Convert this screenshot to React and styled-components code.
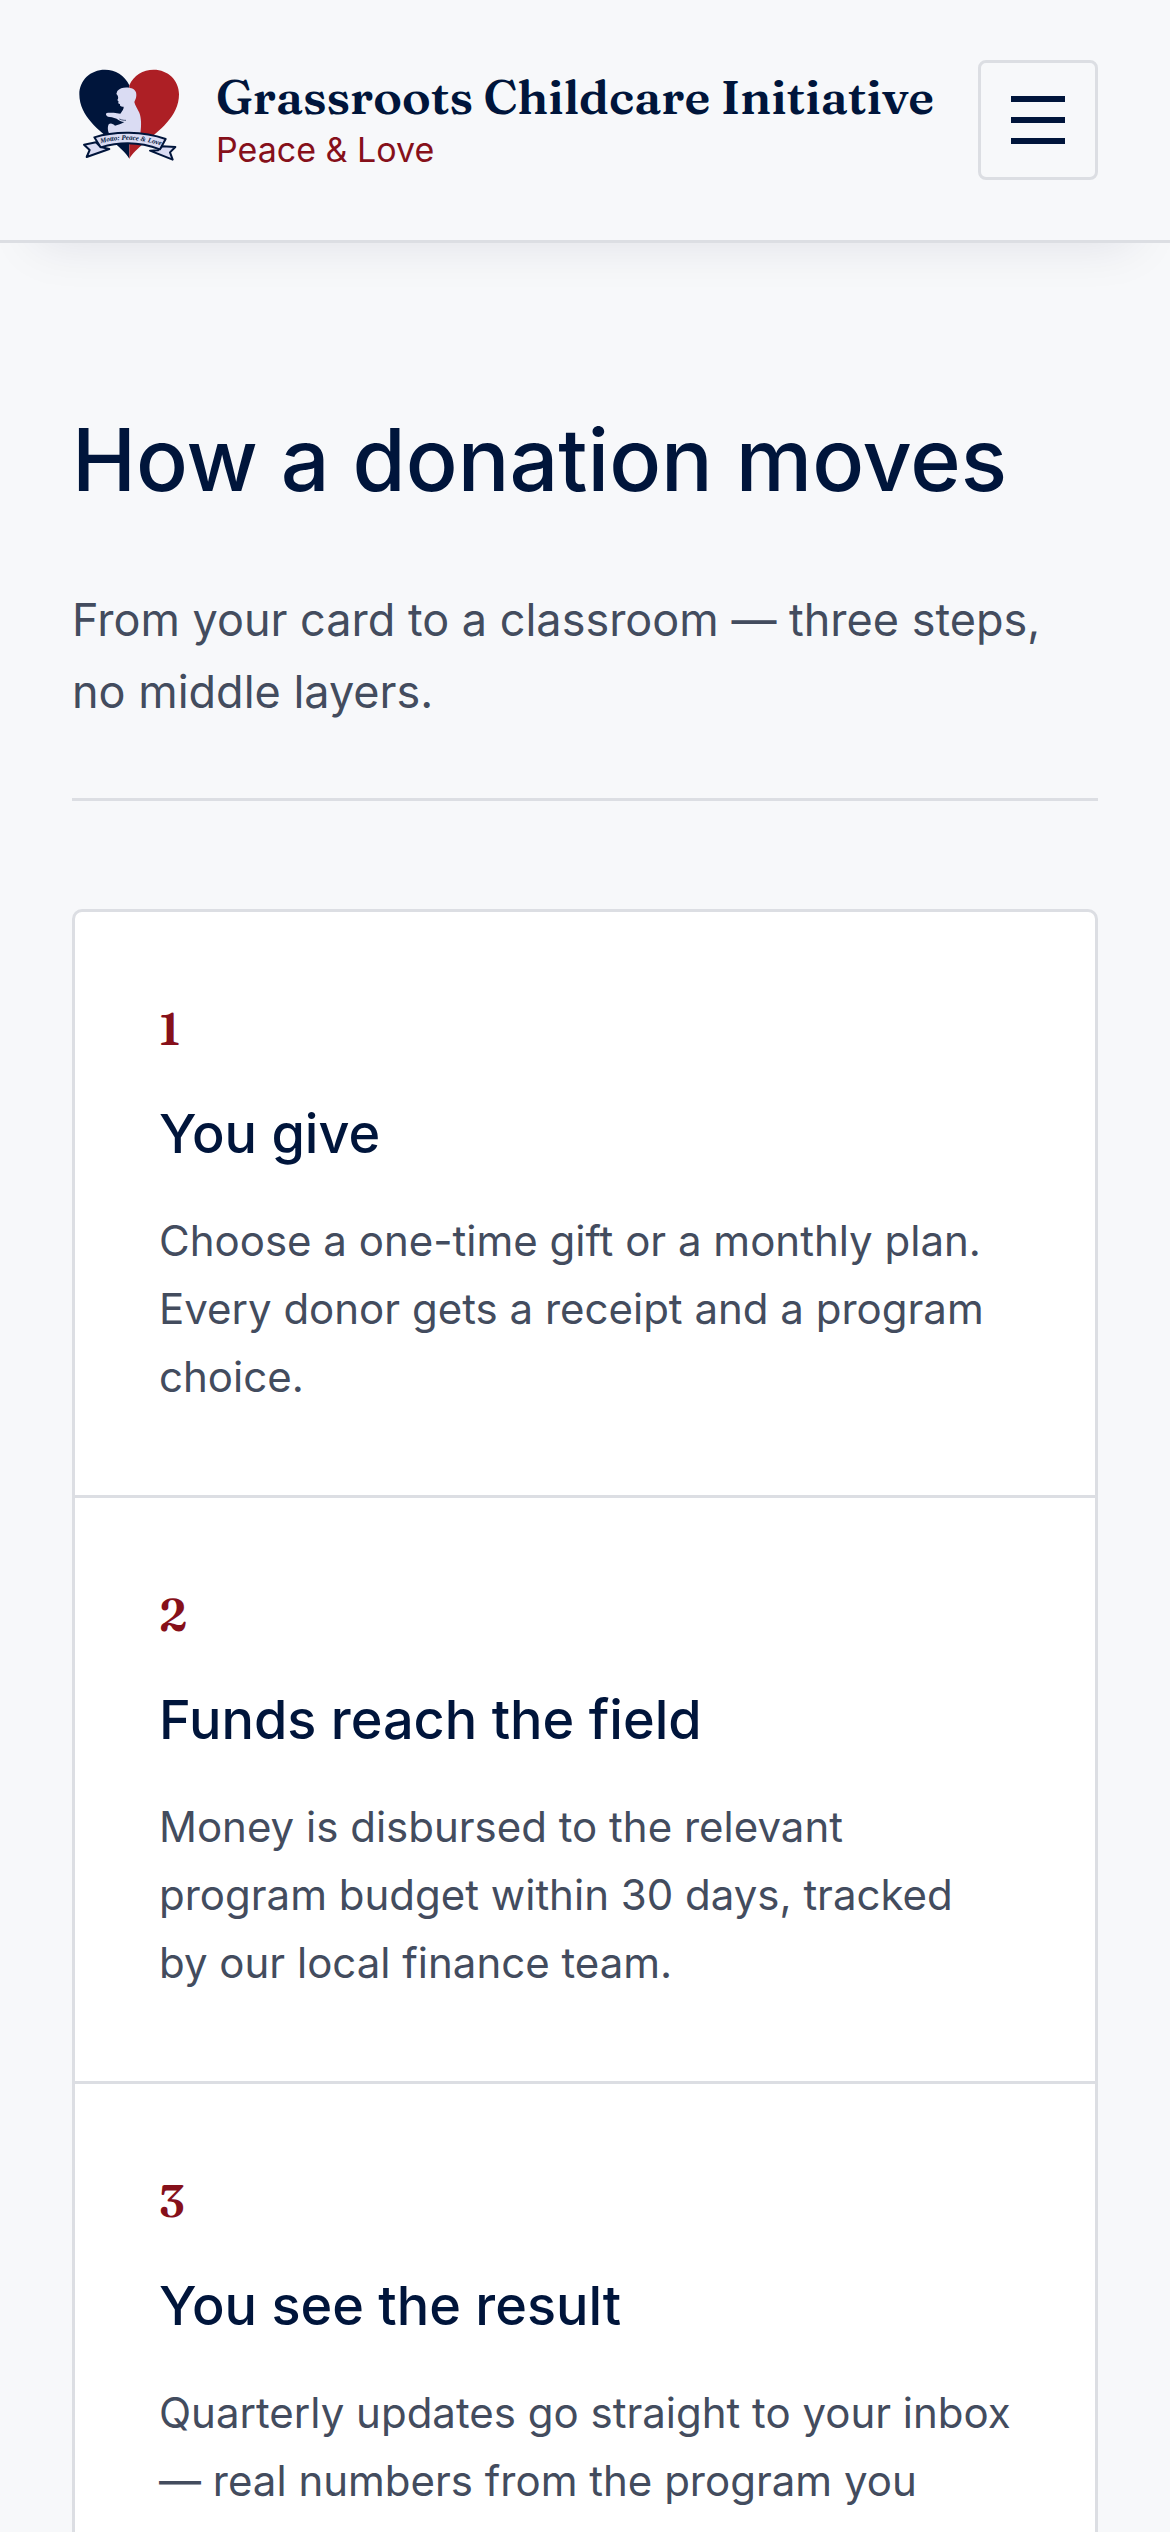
// IMPORTS
// react
import React from 'react';
// styled components
import styled, { createGlobalStyle } from 'styled-components';

// DATA
const steps = [
    {
        number: 1,
        title: 'You give',
        text: 'Choose a one-time gift or a monthly plan. Every donor gets a receipt and a program choice.',
    },
    {
        number: 2,
        title: 'Funds reach the field',
        text: 'Money is disbursed to the relevant program budget within 30 days, tracked by our local finance team.',
    },
    {
        number: 3,
        title: 'You see the result',
        text: 'Quarterly updates go straight to your inbox — real numbers from the program you',
    },
];

// COMPONENTS
const Logo = () => (
    <LogoMark viewBox="36 39 342 342" aria-hidden="true">
        {/* heart halves */}
        <path
            fill="#00153b"
            d="M208 106 C194 76 166 59 135 59 C91 59 58 91 58 133 C58 199 120 244 160 276 C182 295 199 310 208 326 Z"
        />
        <path
            fill="#ad1f25"
            d="M208 106 C221 76 249 59 281 59 C324 59 357 91 357 133 C357 199 296 244 256 276 C234 295 217 310 208 326 Z"
        />
        {/* child */}
        <path
            fill="#dadcf3"
            d="M172 123 C180 113 197 111 210 114 C223 116 230 124 229 136 C229 144 226 149 223 156 C225 166 232 176 238 188 C244 203 245 226 241 250 L147 250 C143 242 142 228 147 222 C153 218 160 222 165 227 C174 225 184 221 193 216 C184 215 177 211 170 206 C160 202 151 200 144 200 C139 198 136 193 139 190 C144 187 154 189 161 188 L181 191 C187 183 192 176 191 170 C184 171 178 168 180 162 C175 161 173 159 176 155 L172 150 C177 144 174 136 169 132 Z"
        />
        <path d="M178 207 C187 211 193 211 198 211" fill="none" stroke="#00153b" strokeWidth="2" />
        {/* ribbon tails */}
        <g fill="#dadcf3" stroke="#00153b" strokeWidth="6" strokeLinejoin="round">
            <path d="M108 277 L72 284 L89 300 L80 321 L148 297 L122 291 Z" />
            <path d="M307 289 L346 291 L330 307 L338 329 L270 302 L294 301 Z" />
            <path d="M103 262 C163 243 249 243 317 267 L300 298 C243 276 179 275 122 292 Z" />
        </g>
        <path id="ribbon-line" fill="none" d="M122 280 C181 264 242 265 316 291" />
        <LogoText>
            <textPath href="#ribbon-line">Motto: Peace &amp; Love</textPath>
        </LogoText>
    </LogoMark>
);

const App = () => {
    return (
        <>
            <GlobalStyle />
            <Header>
                <Brand href="#">
                    <Logo />
                    <BrandText>
                        <BrandName>Grassroots Childcare Initiative</BrandName>
                        <Tagline>Peace &amp; Love</Tagline>
                    </BrandText>
                </Brand>
                <MenuButton type="button" aria-label="Menu">
                    <MenuBar />
                    <MenuBar />
                    <MenuBar />
                </MenuButton>
            </Header>

            <Main>
                <Intro>
                    <h1>How a donation moves</h1>
                    <p>From your card to a classroom — three steps, no middle layers.</p>
                </Intro>

                <StepList>
                    {steps.map((step) => (
                        <Step key={step.number}>
                            <StepNumber>{step.number}</StepNumber>
                            <StepTitle>{step.title}</StepTitle>
                            <StepText>{step.text}</StepText>
                        </Step>
                    ))}
                </StepList>
            </Main>
        </>
    );
};

// STYLED COMPONENTS
const GlobalStyle = createGlobalStyle`
    * {
        box-sizing: border-box;
        margin: 0;
        padding: 0;
    }

    body {
        background-color: #f7f8fa;
        color: #00153b;
        font-family: Inter, 'Liberation Sans', sans-serif;
    }
`

const Header = styled.header`
    display: flex;
    justify-content: space-between;
    align-items: center;
    padding: 60px 72px;
    border-bottom: 3px solid #dcdee3;
    background-color: #f7f8fa;
    box-shadow: 0 36px 48px -36px rgba(0, 21, 59, 0.1);
`

const Brand = styled.a`
    display: flex;
    align-items: center;
    gap: 30px;
    color: inherit;
    text-decoration: none;
`

const LogoMark = styled.svg`
    width: 114px;
    height: 114px;
    flex-shrink: 0;
`

const LogoText = styled.text`
    fill: #00153b;
    font-family: 'Liberation Serif', serif;
    font-size: 21px;
    font-style: italic;
    font-weight: bold;
`

const BrandText = styled.span`
    display: flex;
    flex-direction: column;
`

const BrandName = styled.span`
    font-family: Fraunces, 'Liberation Serif', serif;
    font-size: 48px;
    font-weight: 600;
    line-height: 60px;
    white-space: nowrap;
`

const Tagline = styled.span`
    color: #86101a;
    font-size: 34px;
    line-height: 46px;
`

const MenuButton = styled.button`
    display: flex;
    flex-direction: column;
    justify-content: center;
    align-items: center;
    gap: 15px;
    width: 120px;
    height: 120px;
    flex-shrink: 0;
    border: 3px solid #dcdee3;
    border-radius: 8px;
    background: transparent;
    cursor: pointer;
`

const MenuBar = styled.span`
    width: 54px;
    height: 6px;
    background-color: #00153b;
`

const Main = styled.main`
    padding: 168px 72px;
`

const Intro = styled.section`
    margin-bottom: 108px;
    padding-bottom: 70px;
    border-bottom: 3px solid #dcdee3;

        h1 {
            margin-bottom: 75px;
            font-size: 86px;
            font-weight: 500;
            line-height: 98px;
        }

        p {
            max-width: 1000px;
            color: #434c5e;
            font-size: 45px;
            line-height: 72px;
        }
`

const StepList = styled.ol`
    border: 3px solid #dcdee3;
    border-radius: 10px;
    background-color: #fff;
    list-style: none;
`

const Step = styled.li`
    padding: 84px;

        & + & {
            border-top: 3px solid #dcdee3;
        }
`

const StepNumber = styled.div`
    margin-bottom: 40px;
    color: #86101a;
    font-family: Fraunces, 'Liberation Serif', serif;
    font-size: 45px;
    font-weight: 600;
    line-height: 65px;
`

const StepTitle = styled.h2`
    margin-bottom: 40px;
    font-size: 54px;
    font-weight: 500;
    line-height: 66px;
`

const StepText = styled.p`
    color: #434c5e;
    font-size: 42px;
    line-height: 68px;
`

// EXPORT
export default App;
